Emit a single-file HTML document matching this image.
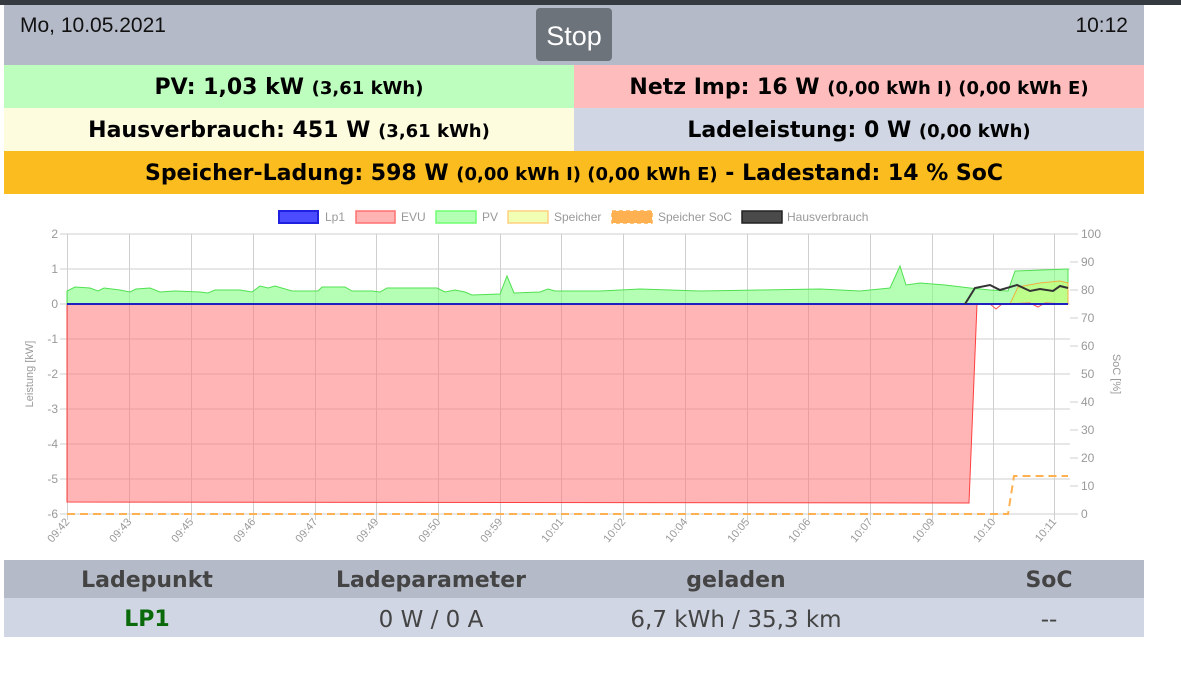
<!DOCTYPE html>
<html><head><meta charset="utf-8"><style>
*{margin:0;padding:0;box-sizing:border-box}
body{width:1181px;height:691px;background:#fff;font-family:"Liberation Sans",sans-serif;position:relative;overflow:hidden}
.top{position:absolute;left:0;top:0;width:1181px;height:5px;background:#343a40}
.hdr{position:absolute;left:4px;top:5px;width:1140px;height:60px;background:#b4bac8}
.date{position:absolute;left:16px;top:9px;font-size:21px;color:#111}
.time{position:absolute;right:16px;top:9px;font-size:21px;color:#111}
.stop{position:absolute;left:532px;top:3px;width:76px;height:53px;background:#6c737b;border-radius:4px;color:#fff;font-size:27px;text-align:center;line-height:56px}
.cell{position:absolute;height:43px;text-align:center;font-weight:bold;font-size:22px;line-height:45px;color:#000;white-space:nowrap;font-family:"DejaVu Sans",sans-serif}
.cell small{font-size:18px}
.tb{position:absolute;left:4px;width:1140px;font-family:"DejaVu Sans",sans-serif}
.tb div{position:absolute;top:0;text-align:center;width:300px;margin-left:-150px}
</style></head><body>
<div class="top"></div>
<div class="hdr"><div class="date">Mo, 10.05.2021</div><div class="stop">Stop</div><div class="time">10:12</div></div>
<div class="cell" style="left:4px;top:65px;width:570px;background:#bdfebf">PV: 1,03 kW <small>(3,61 kWh)</small></div>
<div class="cell" style="left:574px;top:65px;width:570px;background:#febcbd">Netz Imp: 16 W <small>(0,00 kWh I) (0,00 kWh E)</small></div>
<div class="cell" style="left:4px;top:108px;width:570px;background:#fefcdf">Hausverbrauch: 451 W <small>(3,61 kWh)</small></div>
<div class="cell" style="left:574px;top:108px;width:570px;background:#d0d6e4">Ladeleistung: 0 W <small>(0,00 kWh)</small></div>
<div class="cell" style="left:4px;top:151px;width:1140px;background:#fbbc1f">Speicher-Ladung: 598 W <small>(0,00 kWh I) (0,00 kWh E)</small> - Ladestand: 14 % SoC</div>

<svg style="position:absolute;left:0;top:0" width="1181" height="560" font-family="Liberation Sans,sans-serif">
<g font-size="12" fill="#999">
<rect x="279" y="211" width="39" height="12" fill="#4b4bff" stroke="#2020e0" stroke-width="2"/><text x="325" y="221">Lp1</text>
<rect x="356" y="211" width="39" height="12" fill="#ffb3b3" stroke="#ff7070" stroke-width="1.5"/><text x="401" y="221">EVU</text>
<rect x="436" y="211" width="40" height="12" fill="#b3ffb3" stroke="#70ff70" stroke-width="1.5"/><text x="482" y="221">PV</text>
<rect x="508" y="211" width="40" height="12" fill="#f0ffb3" stroke="#ffd080" stroke-width="1.5"/><text x="554" y="221">Speicher</text>
<rect x="612" y="211" width="40" height="12" fill="#ffb050" stroke="#ffb050" stroke-width="1.5" stroke-dasharray="4 3"/><text x="658" y="221">Speicher SoC</text>
<rect x="742" y="211" width="40" height="12" fill="#4a4a4a" stroke="#222" stroke-width="1.5"/><text x="787" y="221">Hausverbrauch</text>
</g>
<g stroke="#cfcfcf" stroke-width="1">
<line x1="60" y1="234" x2="1070" y2="234"/><line x1="60" y1="269" x2="1070" y2="269"/><line x1="60" y1="304" x2="1070" y2="304"/><line x1="60" y1="339" x2="1070" y2="339"/><line x1="60" y1="374" x2="1070" y2="374"/><line x1="60" y1="409" x2="1070" y2="409"/><line x1="60" y1="444" x2="1070" y2="444"/><line x1="60" y1="479" x2="1070" y2="479"/><line x1="60" y1="514" x2="1078" y2="514"/>
<line x1="1070" y1="262" x2="1078" y2="262"/><line x1="1070" y1="290" x2="1078" y2="290"/><line x1="1070" y1="318" x2="1078" y2="318"/><line x1="1070" y1="346" x2="1078" y2="346"/><line x1="1070" y1="402" x2="1078" y2="402"/><line x1="1070" y1="430" x2="1078" y2="430"/><line x1="1070" y1="458" x2="1078" y2="458"/><line x1="1070" y1="486" x2="1078" y2="486"/><line x1="1070" y1="234" x2="1078" y2="234"/>
<path d="M67.5 234V520M129.5 234V520M191.5 234V520M253.5 234V520M315.5 234V520M376.5 234V520M438.5 234V520M500.5 234V520M561.5 234V520M623.5 234V520M685.5 234V520M747.5 234V520M808.5 234V520M870.5 234V520M932.5 234V520M993.5 234V520M1054.5 234V520"/>
</g>
<path d="M67 304V502L969 503L977 304Z" fill="rgba(255,120,120,0.55)" stroke="#ff4040" stroke-width="1"/>
<path d="M67 304L67 291L75 287L90 288L98 291L104 288L120 290L130 292L136 289L150 288L160 292L175 291L200 292L208 293L215 290L240 290L252 292L260 286L268 288L275 286L292 291L318 291L322 287L345 287L352 291L372 291L380 292L387 288L420 288L437 288L445 292L455 290L465 292L472 295L500 294L507 276L514 293L540 292L548 289L555 291L600 291L640 289L700 291L760 290L820 289L860 291L890 288L900 266L906 285L920 283L945 285L970 288L990 290L1008 291L1015 271L1068 269L1068 304Z" fill="rgba(130,255,130,0.6)" stroke="#50e050" stroke-width="1"/>
<path d="M1010 304L1018 287L1040 283L1060 281L1068 283L1068 304Z" fill="rgba(200,255,100,0.5)" stroke="#f0b040" stroke-width="1"/>
<path d="M990 304L996 309L1002 304L1030 303L1038 307L1045 303L1068 304" fill="none" stroke="#ff5050" stroke-width="1"/>
<line x1="67" y1="304" x2="1068" y2="304" stroke="#2020c0" stroke-width="2"/>
<path d="M965 304L975 288L990 285L1000 290L1017 285L1030 291L1040 289L1053 291L1060 286L1068 288" fill="none" stroke="#333" stroke-width="2"/>
<path d="M67 514L1008 514L1014 476L1068 476" fill="none" stroke="#ffb050" stroke-width="2" stroke-dasharray="8 5"/>
<g font-size="12" fill="#999" text-anchor="end">
<text x="58" y="238">2</text><text x="58" y="273">1</text><text x="58" y="308">0</text><text x="58" y="343">-1</text><text x="58" y="378">-2</text><text x="58" y="413">-3</text><text x="58" y="448">-4</text><text x="58" y="483">-5</text><text x="58" y="518">-6</text>
</g>
<g font-size="12" fill="#999">
<text x="1081" y="238">100</text><text x="1081" y="266">90</text><text x="1081" y="294">80</text><text x="1081" y="322">70</text><text x="1081" y="350">60</text><text x="1081" y="378">50</text><text x="1081" y="406">40</text><text x="1081" y="434">30</text><text x="1081" y="462">20</text><text x="1081" y="490">10</text><text x="1081" y="518">0</text>
<text transform="translate(33,374) rotate(-90)" text-anchor="middle" font-size="11">Leistung [kW]</text>
<text transform="translate(1113,374) rotate(90)" text-anchor="middle" font-size="11">SoC [%]</text>
</g>
<g font-size="11" fill="#999" text-anchor="end">
<text transform="translate(70,522) rotate(-50)">09:42</text>
<text transform="translate(132,522) rotate(-50)">09:43</text>
<text transform="translate(194,522) rotate(-50)">09:45</text>
<text transform="translate(256,522) rotate(-50)">09:46</text>
<text transform="translate(318,522) rotate(-50)">09:47</text>
<text transform="translate(379,522) rotate(-50)">09:49</text>
<text transform="translate(441,522) rotate(-50)">09:50</text>
<text transform="translate(503,522) rotate(-50)">09:59</text>
<text transform="translate(564,522) rotate(-50)">10:01</text>
<text transform="translate(626,522) rotate(-50)">10:02</text>
<text transform="translate(688,522) rotate(-50)">10:04</text>
<text transform="translate(750,522) rotate(-50)">10:05</text>
<text transform="translate(811,522) rotate(-50)">10:06</text>
<text transform="translate(873,522) rotate(-50)">10:07</text>
<text transform="translate(935,522) rotate(-50)">10:09</text>
<text transform="translate(996,522) rotate(-50)">10:10</text>
<text transform="translate(1057,522) rotate(-50)">10:11</text>
</g>
</svg>

<div class="tb" style="top:560px;height:38px;background:#b4bac8;font-weight:bold;font-size:22px;color:#444;line-height:42px">
<div style="left:143px">Ladepunkt</div><div style="left:427px">Ladeparameter</div><div style="left:732px">geladen</div><div style="left:1045px">SoC</div>
</div>
<div class="tb" style="top:598px;height:39px;background:#d0d6e4;font-size:23px;color:#444;line-height:44px">
<div style="left:143px;color:#0a6a0a;font-weight:bold;font-size:22px">LP1</div><div style="left:427px">0 W / 0 A</div><div style="left:732px">6,7 kWh / 35,3 km</div><div style="left:1045px">--</div>
</div>
</body></html>
